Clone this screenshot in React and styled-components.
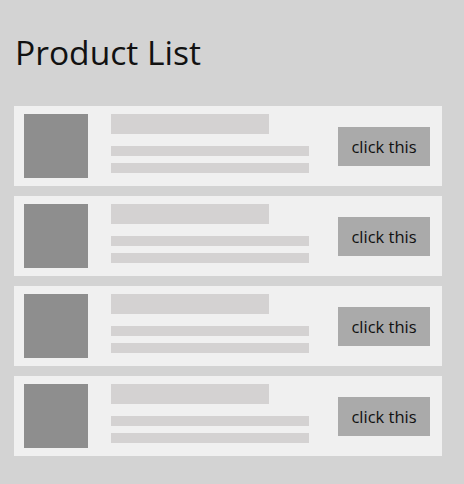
import React from 'react';
import styled, { createGlobalStyle } from 'styled-components';

const GlobalStyle = createGlobalStyle`
    html, body {
        margin: 0;
        padding: 0;
        background-color: #d3d3d3;
        font-family: 'Open Sans', 'Noto Sans', sans-serif;
    }
`;

const Page = styled.main`
    width: 464px;
    box-sizing: border-box;
    padding: 32px 22px 28px 14px;
`;

const Title = styled.h1`
    margin: 0 0 34px 1px;
    font-size: 33.6px;
    line-height: 40px;
    font-weight: 400;
    color: #111;
`;

const List = styled.ul`
    list-style: none;
    margin: 0;
    padding: 0;
    display: flex;
    flex-direction: column;
    gap: 10px;
`;

const Card = styled.li`
    display: flex;
    align-items: center;
    height: 80px;
    box-sizing: border-box;
    padding: 8px 12px 8px 10px;
    background-color: #f0f0f0;
`;

const Thumb = styled.div`
    width: 64px;
    height: 64px;
    flex-shrink: 0;
    background-color: #8e8e8e;
`;

const Info = styled.div`
    align-self: flex-start;
    display: flex;
    flex-direction: column;
    width: 198px;
    margin-left: 23px;
`;

const Bar = styled.div`
    width: ${(p) => p.$width}px;
    height: ${(p) => p.$height}px;
    margin-top: ${(p) => p.$gap || 0}px;
    background-color: #d4d2d2;
`;

const Button = styled.button`
    margin-left: auto;
    width: 92px;
    height: 39px;
    padding: 0;
    border: none;
    background-color: #aaaaaa;
    color: #111;
    font-family: inherit;
    font-size: 16.5px;
    cursor: pointer;
`;

const products = [1, 2, 3, 4];

const App = () => (
    <Page>
        <GlobalStyle />
        <Title>Product List</Title>
        <List>
            {products.map((id) => (
                <Card key={id}>
                    <Thumb />
                    <Info>
                        <Bar $width={158} $height={20} />
                        <Bar $width={198} $height={10} $gap={12} />
                        <Bar $width={198} $height={10} $gap={7} />
                    </Info>
                    <Button>click this</Button>
                </Card>
            ))}
        </List>
    </Page>
);

export default App;
